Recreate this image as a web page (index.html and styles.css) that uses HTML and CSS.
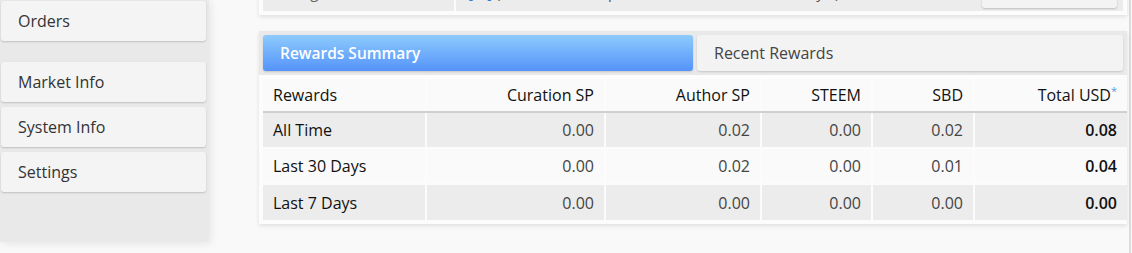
FILE: index.html
```html
<!DOCTYPE html>
<html>
<head>
<meta charset="utf-8">
<link rel="stylesheet" href="styles.css">
</head>
<body>
<div class="page">
  <aside class="sidebar">
    <a class="nav-item">Orders</a>
    <div class="nav-sep"></div>
    <a class="nav-item">Market Info</a>
    <a class="nav-item">System Info</a>
    <a class="nav-item">Settings</a>
  </aside>
  <main class="main">
    <section class="card top-card">
      <div class="info-row">
        <div class="info-label">Voting CSI</div>
        <div class="info-value"><span class="blue">[ ? ]</span> ( <span class="blue">0.00 %</span> self, <span class="blue">0</span> upvotes, <span class="blue">0</span> accounts, last <span class="blue">0.0</span> days )</div>
        <div class="info-action"><span class="btn">Refresh</span></div>
      </div>
    </section>
    <section class="card rewards-card">
      <div class="tabs">
        <div class="tab active">Rewards Summary</div>
        <div class="tab">Recent Rewards</div>
      </div>
      <table class="rewards">
        <thead>
          <tr>
            <th class="c1">Rewards</th>
            <th class="c2">Curation SP</th>
            <th class="c3">Author SP</th>
            <th class="c4">STEEM</th>
            <th class="c5">SBD</th>
            <th class="c6">Total USD<sup class="ast">*</sup></th>
          </tr>
        </thead>
        <tbody>
          <tr class="odd">
            <td class="label">All Time</td><td>0.00</td><td>0.02</td><td>0.00</td><td>0.02</td><td class="total">0.08</td>
          </tr>
          <tr class="even">
            <td class="label">Last 30 Days</td><td>0.00</td><td>0.02</td><td>0.00</td><td>0.01</td><td class="total">0.04</td>
          </tr>
          <tr class="odd">
            <td class="label">Last 7 Days</td><td>0.00</td><td>0.00</td><td>0.00</td><td>0.00</td><td class="total">0.00</td>
          </tr>
        </tbody>
      </table>
    </section>
  </main>
</div>
</body>
</html>
```
FILE: styles.css
```css
html, body {
  margin: 0;
  padding: 0;
  height: 100%;
  overflow: hidden;
}
body {
  background: #f9f9f9;
  font-family: "Open Sans", "Liberation Sans", sans-serif;
  color: #333;
}
.page {
  display: flex;
  align-items: flex-start;
  width: 1129px;
  height: 253px;
  border-right: 2px solid #dcdcdc;
  background: #f9f9f9;
}
.sidebar {
  width: 209px;
  height: 242px;
  background: #e9e9e9;
  box-shadow: 2px 2px 8px rgba(0,0,0,0.08);
  display: flex;
  flex-direction: column;
  gap: 5px;
  padding-top: 1px;
  box-sizing: border-box;
  flex-shrink: 0;
}
.nav-item {
  display: flex;
  align-items: center;
  height: 40px;
  width: 205px;
  margin-left: 1px;
  box-sizing: border-box;
  padding-left: 17px;
  background: #f4f4f4;
  border-radius: 3px;
  box-shadow: 0 1px 2px rgba(0,0,0,0.18);
  font-size: 16px;
  color: #333;
}
.nav-sep {
  height: 11px;
}
.main {
  margin-left: 50px;
  width: 868px;
  display: flex;
  flex-direction: column;
  gap: 16px;
}
.card {
  background: #fcfcfc;
  padding: 4px;
  box-shadow: 0 2px 4px rgba(0,0,0,0.1);
}
.top-card {
  margin-top: -30px;
  padding-top: 4px;
}
.info-row {
  display: flex;
  height: 37px;
  background: #ececec;
  font-size: 15px;
  align-items: center;
}
.info-label {
  width: 193px;
  padding-left: 11px;
  padding-bottom: 2px;
  color: #666;
  border-right: 2px solid #fcfcfc;
  height: 100%;
  display: flex;
  align-items: center;
  box-sizing: border-box;
}
.info-value {
  flex: 1;
  padding-left: 12px;
  padding-bottom: 2px;
  color: #555;
}
.blue { color: #3a7bd5; }
.info-action {
  width: 135px;
  margin-right: 6px;
  height: 100%;
  display: flex;
  align-items: flex-end;
  padding-bottom: 3px;
  box-sizing: border-box;
}
.btn {
  display: block;
  width: 135px;
  height: 30px;
  background: #f3f3f3;
  border-radius: 3px;
  box-shadow: 0 1px 2px rgba(0,0,0,0.2);
  color: transparent;
}
.rewards-card {
  padding: 0 0 4px 0;
}
.tabs {
  display: flex;
  gap: 4px;
  padding: 4px;
  background: #e9e9e9;
}
.tab {
  height: 36px;
  display: flex;
  align-items: center;
  padding-left: 17px;
  border-radius: 3px;
  font-size: 16px;
  box-sizing: border-box;
}
.tab.active {
  width: 430px;
  background: linear-gradient(#8dcbfd, #5593fa);
  color: #fff;
  font-weight: 600;
  font-size: 15.5px;
  box-shadow: 0 1px 2px rgba(0,0,0,0.15);
}
.tab:not(.active) {
  flex: 1;
  background: #f3f3f3;
  color: #444;
  box-shadow: 0 1px 2px rgba(0,0,0,0.15);
}
.rewards {
  margin: 4px 4px 0 4px;
  width: 864px;
  border-collapse: collapse;
  font-size: 16px;
  table-layout: fixed;
}
.rewards th, .rewards td {
  height: 36px;
  padding: 0 10px;
  text-align: right;
  box-sizing: border-box;
  border-left: 2px solid #fcfcfc;
  border-top: 2px solid #fcfcfc;
}
.rewards th:first-child, .rewards td:first-child {
  border-left: none;
  text-align: left;
  padding-left: 10px;
}
.rewards thead th {
  font-weight: 400;
  color: #111;
  background: #fafafa;
  height: 33px;
  border-top: none;
  border-bottom: 2px solid #cfcfcf;
}
.rewards .c1 { width: 163px; }
.rewards .c2 { width: 179px; }
.rewards .c3 { width: 156px; }
.rewards .c4 { width: 111px; }
.rewards .c5 { width: 102px; }
.rewards .c6 { width: 153px; }
.rewards td {
  color: #444;
}
.rewards td.label {
  color: #111;
}
.rewards td.total {
  color: #111;
  font-weight: 600;
}
.rewards tr.odd td { background: #ececec; }
.rewards tr.even td { background: #fafafa; }
.ast {
  color: #5a9ae0;
  font-size: 11px;
  font-weight: 400;
  vertical-align: 6px;
  line-height: 0;
}
```
